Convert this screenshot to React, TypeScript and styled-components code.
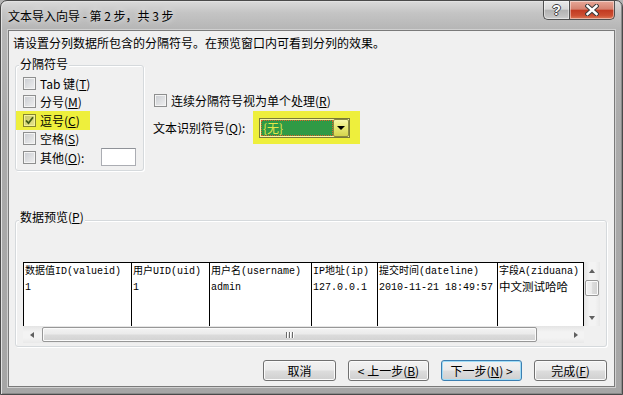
import React from "react";
import styled, { createGlobalStyle, css } from "styled-components";

const GlobalStyle = createGlobalStyle`
  html, body { margin: 0; padding: 0; background: #b4b4b4; }
  body { font-family: "Noto Sans CJK SC", "Noto Sans", sans-serif; font-size: 12px; color: #000; }
  #root { width: 623px; height: 395px; }
`;

const Window = styled.div`
  width: 623px;
  height: 395px;
  box-sizing: border-box;
  display: flex;
  flex-direction: column;
  border: 1px solid #4a4a4a;
  border-radius: 7px 7px 0 0;
  overflow: hidden;
  background: linear-gradient(180deg, #dadada 0px, #c4c4c4 12px, #b6b6b6 28px, #ababab 120px, #a6a6a6 100%);
  box-shadow: inset 1px 1px 0 #e2e2e2, inset -1px -1px 0 #8a8a8a;
`;

const TitleBar = styled.div`
  height: 29px;
  display: flex;
  align-items: flex-start;
  flex-shrink: 0;
`;

const Title = styled.div`
  flex: 1;
  padding: 7px 0 0 7px;
  line-height: 16px;
  font-size: 12px;
  color: #000;
  text-shadow: 0 0 6px rgba(255, 255, 255, 0.8);
`;

const Caption = styled.div`
  display: flex;
  margin-right: 7px;
`;

const CapButton = styled.div<{ $close?: boolean }>`
  height: 19px;
  box-sizing: border-box;
  display: flex;
  align-items: center;
  justify-content: center;
  border: 1px solid #505050;
  border-top: none;
  box-shadow: inset 0 0 0 1px rgba(255, 255, 255, 0.45);
  ${(p) =>
    p.$close
      ? css`
          width: 46px;
          border-radius: 0 0 5px 0;
          background: linear-gradient(180deg, #e7a898 0%, #d58270 45%, #c23b22 52%, #cc4e31 80%, #dd7a58 100%);
        `
      : css`
          width: 26px;
          border-right: none;
          border-radius: 0 0 0 5px;
          background: linear-gradient(180deg, #eaeaea 0%, #d8d8d8 45%, #b3b3b3 52%, #c2c2c2 85%, #d0d0d0 100%);
        `}
`;

const HelpGlyph = styled.span`
  font-family: "Liberation Sans", sans-serif;
  font-weight: bold;
  font-size: 14px;
  line-height: 14px;
  color: #fff;
  text-shadow: -1px 0 #404040, 1px 0 #404040, 0 -1px #404040, 0 1px #404040;
`;

const Client = styled.div`
  flex: 1;
  margin: 0 7px 7px 7px;
  border: 1px solid #7a7a7a;
  background: #f0f0f0;
  box-shadow: 0 0 0 1px #d0d0d0;
  display: flex;
  flex-direction: column;
`;

const Instruction = styled.div`
  margin: 4px 0 0 4px;
  line-height: 16px;
  white-space: nowrap;
`;

const TopSection = styled.div`
  display: flex;
  margin: 14px 0 0 6px;
  height: 106px;
`;

const Group = styled.div<{ $w: number; $h: number }>`
  width: ${(p) => p.$w}px;
  height: ${(p) => p.$h}px;
  box-sizing: border-box;
  border: 1px solid #d5d9dc;
  border-radius: 3px;
  box-shadow: inset 1px 1px 0 #fff, 1px 1px 0 #fff;
  display: flex;
  flex-direction: column;
  flex-shrink: 0;
`;

const Legend = styled.div<{ $top: number }>`
  margin: ${(p) => p.$top}px 0 0 3px;
  padding: 0 1px;
  width: fit-content;
  line-height: 14px;
  background: #f0f0f0;
`;

const Rows = styled.div`
  padding-top: 3px;
  display: flex;
  flex-direction: column;
`;

const OptRow = styled.div<{ $hl?: boolean }>`
  height: 18.5px;
  display: flex;
  align-items: center;
  gap: 4px;
  padding: 0 7px;
  box-sizing: border-box;
  white-space: nowrap;
  ${(p) =>
    p.$hl &&
    css`
      width: 74px;
      background: #eeef3c;
    `}
`;

const Box = styled.div<{ $hl?: boolean }>`
  width: 13px;
  height: 13px;
  box-sizing: border-box;
  flex-shrink: 0;
  border: 1px solid ${(p) => (p.$hl ? "#85852e" : "#8e8f8f")};
  box-shadow: inset 0 0 0 1px ${(p) => (p.$hl ? "#f2f29a" : "#f4f4f4")};
  background: ${(p) =>
    p.$hl
      ? "linear-gradient(135deg, #c6c66a 0%, #e6e68a 100%)"
      : "linear-gradient(135deg, #c9ccd1 0%, #f0f0f0 100%)"};
  display: flex;
  align-items: center;
  justify-content: center;
`;

const U = styled.span`
  text-decoration: underline;
`;

const TextBox = styled.div`
  margin-left: auto;
  width: 35px;
  height: 18px;
  box-sizing: border-box;
  border: 1px solid #abadb3;
  border-top-color: #8f9298;
  background: #fff;
`;

const RightCol = styled.div`
  margin-left: 9px;
  display: flex;
  flex-direction: column;
`;

const CheckLine = styled.div`
  margin: 27px 0 0 1px;
  height: 16px;
  display: flex;
  align-items: center;
  gap: 4px;
  white-space: nowrap;
`;

const ComboLine = styled.div`
  margin-top: 3px;
  display: flex;
  align-items: center;
`;

const ComboLabel = styled.div`
  width: 100px;
  line-height: 16px;
  white-space: nowrap;
`;

const Highlight = styled.div`
  width: 107px;
  height: 33px;
  box-sizing: border-box;
  padding: 7px 0 0 6px;
  background: #eeef3c;
`;

const Combo = styled.div`
  width: 91px;
  height: 20px;
  box-sizing: border-box;
  border: 1px solid #7a7a38;
  background: #f6f6a6;
  display: flex;
`;

const ComboField = styled.div`
  flex: 1;
  margin: 1px 0 1px 1px;
  background: #2f9a45;
  outline: 1px dotted #e0602a;
  outline-offset: -1px;
  color: #e6e64a;
  line-height: 16px;
  padding-left: 2px;
`;

const ComboButton = styled.div`
  width: 16px;
  box-sizing: border-box;
  border: 1px solid #8a8a40;
  border-radius: 2px;
  background: linear-gradient(180deg, #f6f6a8 0%, #e8e872 50%, #d4d44e 100%);
  display: flex;
  align-items: center;
  justify-content: center;
`;

const DownTri = styled.div`
  width: 0;
  height: 0;
  border-left: 4px solid transparent;
  border-right: 4px solid transparent;
  border-top: 4px solid #000;
`;

const PreviewGroupWrap = styled.div`
  margin: 49px 0 0 6px;
`;

const TableWrap = styled.div`
  margin: 38px 0 0 7px;
  width: 577px;
  height: 81px;
  display: grid;
  grid-template-columns: 561px 16px;
  grid-template-rows: 64px 17px;
  background: #fff;
`;

const Grid = styled.div`
  display: flex;
  overflow: hidden;
  border-top: 1px solid #000;
  background: #fff;
`;

const Col = styled.div<{ $w: number; $last?: boolean }>`
  width: ${(p) => p.$w}px;
  flex-shrink: 0;
  box-sizing: border-box;
  border-left: 1px solid #000;
  ${(p) => p.$last && "border-right: 1px solid #000;"}
  padding-top: 1px;
  overflow: hidden;
`;

const Cell = styled.div<{ $big?: boolean }>`
  height: 16px;
  line-height: 16px;
  padding-left: 1px;
  white-space: nowrap;
  font-family: "Liberation Mono", "Noto Sans CJK SC", monospace;
  font-size: ${(p) => (p.$big ? "11.5px" : "10px")};
`;

const VScroll = styled.div`
  display: flex;
  flex-direction: column;
  align-items: center;
  background: linear-gradient(90deg, #e4e4e4 0%, #f3f3f3 35%, #f3f3f3 70%, #e9e9e9 100%);
`;

const HScroll = styled.div`
  display: flex;
  align-items: center;
  background: linear-gradient(180deg, #e4e4e4 0%, #f3f3f3 35%, #f3f3f3 70%, #e9e9e9 100%);
`;

const Corner = styled.div`
  background: #f0f0f0;
`;

const ArrowBtn = styled.div<{ $h?: boolean }>`
  ${(p) => (p.$h ? "width: 17px; height: 17px;" : "width: 16px; height: 17px;")}
  flex-shrink: 0;
  display: flex;
  align-items: center;
  justify-content: center;
`;

const Tri = styled.div<{ $dir: "up" | "down" | "left" | "right" }>`
  width: 0;
  height: 0;
  ${(p) =>
    p.$dir === "up"
      ? "border-left:3.5px solid transparent;border-right:3.5px solid transparent;border-bottom:4px solid #606060;"
      : p.$dir === "down"
      ? "border-left:3.5px solid transparent;border-right:3.5px solid transparent;border-top:4px solid #606060;"
      : p.$dir === "left"
      ? "border-top:3.5px solid transparent;border-bottom:3.5px solid transparent;border-right:4px solid #606060;"
      : "border-top:3.5px solid transparent;border-bottom:3.5px solid transparent;border-left:4px solid #606060;"}
`;

const Thumb = styled.div<{ $h?: boolean }>`
  box-sizing: border-box;
  border: 1px solid #979797;
  border-radius: 2px;
  box-shadow: inset 0 0 0 1px #fbfbfb;
  display: flex;
  align-items: center;
  justify-content: center;
  gap: 1px;
  ${(p) =>
    p.$h
      ? css`
          width: 495px;
          height: 15px;
          margin-left: 2px;
          background: linear-gradient(180deg, #f3f3f3 0%, #ebebeb 45%, #dbdbdb 55%, #d2d2d2 100%);
        `
      : css`
          width: 14px;
          height: 16px;
          margin-top: 1px;
          background: linear-gradient(90deg, #f3f3f3 0%, #ebebeb 45%, #dbdbdb 55%, #d2d2d2 100%);
        `}
`;

const GripLine = styled.div`
  width: 1px;
  height: 6px;
  background: #6a6a6a;
  box-shadow: 1px 0 0 #fff;
  margin-right: 1px;
`;

const Spacer = styled.div`
  flex: 1;
`;

const ButtonRow = styled.div`
  margin-top: 13px;
  padding-right: 7px;
  display: flex;
  justify-content: flex-end;
  gap: 12px;
`;

const Button = styled.div<{ $w: number; $focus?: boolean }>`
  width: ${(p) => p.$w}px;
  height: 21px;
  box-sizing: border-box;
  border: 1px solid ${(p) => (p.$focus ? "#3c7fb1" : "#707070")};
  border-radius: 3px;
  background: linear-gradient(180deg, #f2f2f2 0%, #ebebeb 49%, #dddddd 51%, #cfcfcf 100%);
  box-shadow: inset 0 0 0 1px ${(p) => (p.$focus ? "#9fdcf7" : "#fbfbfb")};
  display: flex;
  align-items: center;
  justify-content: center;
  line-height: 16px;
  white-space: nowrap;
`;

const CheckMark = () => (
  <svg width="9" height="9" viewBox="0 0 9 9">
    <path d="M1 4.5 L3.5 7.2 L8 1.2" fill="none" stroke="#3f5a16" strokeWidth="1.8" />
  </svg>
);

const CloseGlyph = () => (
  <svg width="14" height="12" viewBox="0 0 14 12">
    <path d="M2.5 2 L11.5 10 M11.5 2 L2.5 10" stroke="#3a3a3a" strokeWidth="4.4" strokeLinecap="square" />
    <path d="M2.5 2 L11.5 10 M11.5 2 L2.5 10" stroke="#fff" strokeWidth="2.4" strokeLinecap="square" />
  </svg>
);

const columns = [
  { w: 108, head: "数据值ID(valueid)", val: "1" },
  { w: 78, head: "用户UID(uid)", val: "1" },
  { w: 102, head: "用户名(username)", val: "admin" },
  { w: 66, head: "IP地址(ip)", val: "127.0.0.1" },
  { w: 120, head: "提交时间(dateline)", val: "2010-11-21 18:49:57" },
  { w: 87, head: "字段A(ziduana)", val: "中文测试哈哈", big: true },
];

export default function App() {
  return (
    <>
      <GlobalStyle />
      <Window>
        <TitleBar>
          <Title>文本导入向导 - 第 2 步，共 3 步</Title>
          <Caption>
            <CapButton>
              <HelpGlyph>?</HelpGlyph>
            </CapButton>
            <CapButton $close>
              <CloseGlyph />
            </CapButton>
          </Caption>
        </TitleBar>
        <Client>
          <Instruction>请设置分列数据所包含的分隔符号。在预览窗口内可看到分列的效果。</Instruction>
          <TopSection>
            <Group $w={129} $h={106}>
              <Legend $top={-9}>分隔符号</Legend>
              <Rows>
                <OptRow>
                  <Box />
                  <span>
                    Tab 键(<U>T</U>)
                  </span>
                </OptRow>
                <OptRow>
                  <Box />
                  <span>
                    分号(<U>M</U>)
                  </span>
                </OptRow>
                <OptRow $hl>
                  <Box $hl>
                    <CheckMark />
                  </Box>
                  <span>
                    逗号(<U>C</U>)
                  </span>
                </OptRow>
                <OptRow>
                  <Box />
                  <span>
                    空格(<U>S</U>)
                  </span>
                </OptRow>
                <OptRow>
                  <Box />
                  <span>
                    其他(<U>O</U>):
                  </span>
                  <TextBox />
                </OptRow>
              </Rows>
            </Group>
            <RightCol>
              <CheckLine>
                <Box />
                <span>
                  连续分隔符号视为单个处理(<U>R</U>)
                </span>
              </CheckLine>
              <ComboLine>
                <ComboLabel>
                  文本识别符号(<U>Q</U>):
                </ComboLabel>
                <Highlight>
                  <Combo>
                    <ComboField>{"{无}"}</ComboField>
                    <ComboButton>
                      <DownTri />
                    </ComboButton>
                  </Combo>
                </Highlight>
              </ComboLine>
            </RightCol>
          </TopSection>
          <PreviewGroupWrap>
            <Group $w={592} $h={127}>
              <Legend $top={-11}>
                数据预览(<U>P</U>)
              </Legend>
              <TableWrap>
                <Grid>
                  {columns.map((c, i) => (
                    <Col key={i} $w={c.w} $last={i === columns.length - 1}>
                      <Cell>{c.head}</Cell>
                      <Cell $big={c.big}>{c.val}</Cell>
                    </Col>
                  ))}
                </Grid>
                <VScroll>
                  <ArrowBtn>
                    <Tri $dir="up" />
                  </ArrowBtn>
                  <Thumb />
                  <Spacer />
                  <ArrowBtn>
                    <Tri $dir="down" />
                  </ArrowBtn>
                </VScroll>
                <HScroll>
                  <ArrowBtn $h>
                    <Tri $dir="left" />
                  </ArrowBtn>
                  <Thumb $h>
                    <GripLine />
                    <GripLine />
                    <GripLine />
                  </Thumb>
                  <Spacer />
                  <ArrowBtn $h>
                    <Tri $dir="right" />
                  </ArrowBtn>
                </HScroll>
                <Corner />
              </TableWrap>
            </Group>
          </PreviewGroupWrap>
          <ButtonRow>
            <Button $w={73}>取消</Button>
            <Button $w={81}>
              &lt; 上一步(<U>B</U>)
            </Button>
            <Button $w={81} $focus>
              下一步(<U>N</U>) &gt;
            </Button>
            <Button $w={73}>
              完成(<U>F</U>)
            </Button>
          </ButtonRow>
        </Client>
      </Window>
    </>
  );
}
